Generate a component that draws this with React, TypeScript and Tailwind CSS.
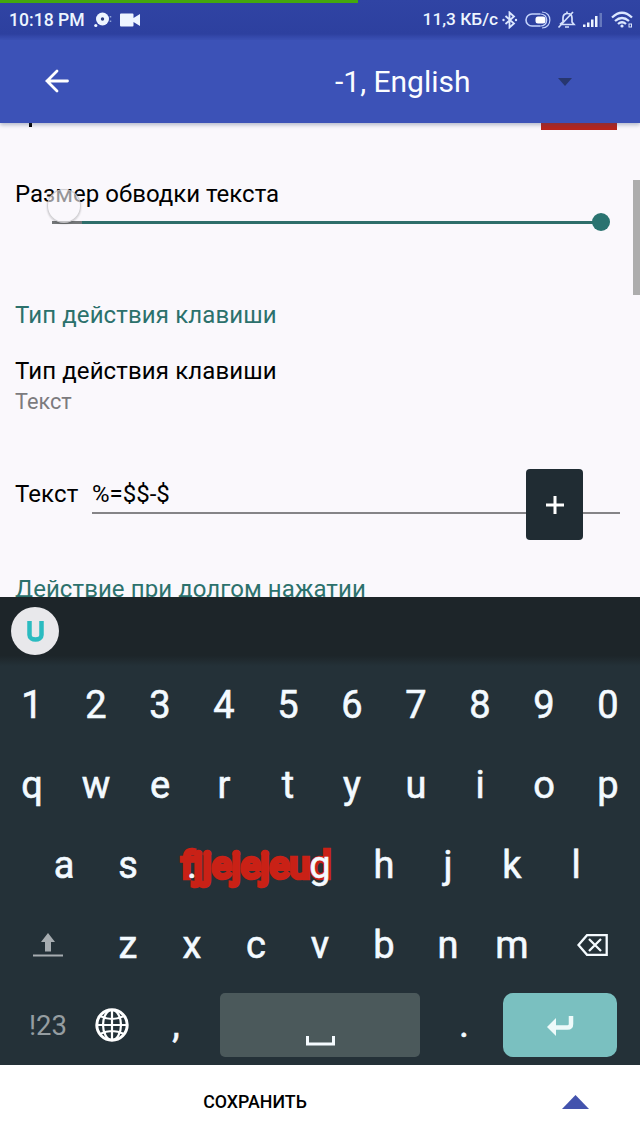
import React from "react";

const digits = ["1", "2", "3", "4", "5", "6", "7", "8", "9", "0"];
const topRow = ["q", "w", "e", "r", "t", "y", "u", "i", "o", "p"];
const bottomLetters = ["z", "x", "c", "v", "b", "n", "m"];

function Key({ children }: { children?: React.ReactNode }) {
  return <div className="flex w-16 shrink-0 items-center justify-center pb-0.5 [-webkit-text-stroke:0.6px_#f0f8ff]">{children}</div>;
}

function StatusBar() {
  return (
    <div className="flex h-10 shrink-0 flex-col bg-[linear-gradient(#3044a4_0,#2d409f_85%,#3c52b7_100%)]">
      <div className="h-[3px] w-[358px] shrink-0 bg-[#43a80d]" />
      <div className="flex h-[34px] items-center pl-[9px] pr-[7px] text-[#edf5ff]">
        <span className="w-[84px] whitespace-nowrap text-[17.6px] font-medium leading-[34px]">10:18 PM</span>
        <svg className="h-[18px] w-[20px]" viewBox="0 0 20 18" fill="none">
          <circle cx="9.5" cy="8" r="6.5" fill="#edf5ff" />
          <circle cx="9.5" cy="8" r="1.7" fill="#2b3c82" />
          <circle cx="2.8" cy="14.5" r="1.6" fill="#edf5ff" />
          <path d="M17.5 5v1.500M17.5 9.500v1.500" stroke="#8fa3d8" strokeWidth="1.500" />
        </svg>
        <svg className="ml-[7px] h-[14px] w-5" viewBox="0 0 20 14" fill="#edf5ff">
          <path d="M1 .5h11.500a1 1 0 0 1 1 1V5L20 1v12l-6.500-4v3.500a1 1 0 0 1-1 1H1a1 1 0 0 1-1-1v-11a1 1 0 0 1 1-1Z" />
        </svg>
        <span className="ml-auto whitespace-nowrap text-[17.300px] font-medium">11,3 КБ/с</span>
        <svg className="ml-1 h-[18px] w-4" viewBox="0 0 16 18" fill="none" stroke="#dbe7ff" strokeWidth="1.800">
          <path d="M3.500 5l8.500 7.500-4.500 4V1.500l4.500 4L3.500 13" />
          <circle cx="1.500" cy="9" r="1.200" fill="#dbe7ff" stroke="none" />
          <circle cx="14" cy="9" r="1.200" fill="#dbe7ff" stroke="none" />
        </svg>
        <svg className="ml-[7px] h-[18px] w-[26px]" viewBox="0 0 26 18" fill="none" stroke="#c3d2fa">
          <path d="M15 3H7a6 6 0 0 0 0 12h8" strokeWidth="1.600" />
          <rect x="10.500" y="5.500" width="10" height="7" rx="2.500" fill="#fff" stroke="none" />
          <path d="M15 3c9-.5 9 12.500 0 12M17 1c10.500 0 10.500 16 0 16" strokeWidth="1.200" />
        </svg>
        <svg className="ml-[6px] h-[18px] w-[19px]" viewBox="0 0 19 18" fill="none" stroke="#d4e0fc" strokeWidth="1.700">
          <path d="M3 13.500h14l-2-2.500V7c0-3-2-4.500-4.500-4.500S6 4 6 7v4l-3 2.500M1.500 16.500L16 1M8 16h4M10 .5v2" />
        </svg>
        <svg className="ml-[6px] h-4 w-[22px]" viewBox="0 0 22 16" fill="#edf5ff">
          <path d="M1 12.500h2.500V15H1zM5 10.500h2.500V15H5zM9 7.500h2.500V15H9zM13 4h2.500v11H13z" />
          <path d="M17.500 1h2.500v14h-2.500z" fill="#6578bd" />
        </svg>
        <svg className="ml-[7px] h-[18px] w-[22px]" viewBox="0 0 22 18" fill="none" stroke="#dbe7ff" strokeWidth="2.300">
          <path d="M1 6.500Q11-3 21 6.500M4 10q7-6 14 0M7 13q4-3.500 8 0" />
          <circle cx="11" cy="15" r="1.600" fill="#dbe7ff" stroke="none" />
          <rect x="18" y="13" width="2.500" height="3" strokeWidth="1" />
        </svg>
      </div>
    </div>
  );
}

export default function App() {
  return (
    <div className="flex h-[1138px] w-[640px] flex-col overflow-hidden bg-white font-['Roboto',sans-serif] text-black">
      <StatusBar />
      <header className="z-10 flex h-[83px] shrink-0 items-center bg-[#3c52b7] pl-[44px] shadow-[0_2px_4px_rgba(50,70,110,0.35)]">
        <svg className="mb-0.5 h-6 w-[26px]" viewBox="0 0 26 24" fill="none" stroke="#fff" strokeWidth="2.800" strokeLinecap="round">
          <path d="M13 2L3 12l10 10M3 12h20.500" />
        </svg>
        <span className="ml-[265px] w-[223px] whitespace-nowrap text-[30px] leading-10 text-[#fbfdff]">-1, English</span>
        <svg className="h-2 w-[14px]" viewBox="0 0 14 8">
          <path d="M0 0h14L7 8z" fill="#27366f" />
        </svg>
      </header>

      <main className="relative flex h-[474px] shrink-0 flex-col overflow-hidden bg-[#faf8fc] text-[24px] leading-8">
        <div className="flex h-[7px] shrink-0 items-start">
          <div className="ml-[29px] h-1 w-[3px] bg-black" />
          <div className="ml-[509px] h-[7px] w-[76px] bg-[#b7251c]" />
        </div>
        <div className="relative mt-[48px] h-[51px] shrink-0 pl-[15px]">
          <div className="whitespace-nowrap">Размер обводки текста</div>
          <div className="mt-[3px] flex h-[18px] items-center pl-[37px]">
            <div className="h-[3px] w-[30px] bg-[#747779]" />
            <div className="h-[3px] w-[511px] bg-[#2e6e6a]" />
            <div className="-ml-px h-[18px] w-[18px] rounded-full bg-[#2a7370]" />
          </div>
          <div className="absolute left-[47px] top-[11px] h-[34px] w-[34px] rounded-full border border-[#bdbdc0]/70 bg-[#faf8fc]/60 shadow-[0_1px_2px_rgba(0,0,0,0.2)]" />
        </div>
        <h2 className="mt-[70px] shrink-0 pl-[15px] tracking-[0.12px] text-[#2c716c]">Тип действия клавиши</h2>
        <div className="mt-[24px] shrink-0 pl-[15px] tracking-[0.12px]">Тип действия клавиши</div>
        <div className="shrink-0 pl-[15px] text-[21.700px] leading-[30px] text-[#7c7b7e]">Текст</div>
        <div className="mt-[52px] flex h-[72px] shrink-0 items-start pl-[15px]">
          <span className="mt-[9px] w-[77px] tracking-[0.100px]">Текст</span>
          <div className="flex h-[45px] w-[528px] items-start border-b-2 border-[#858487]">
            <span className="mt-[9px] leading-8">%=$$-$</span>
            <button className="ml-auto mr-[37px] flex h-[71px] w-[57px] shrink-0 items-center justify-center rounded-[4px] bg-[#202c33]">
              <svg className="h-[18px] w-[18px]" viewBox="0 0 18 18" stroke="#fff" strokeWidth="3">
                <path d="M0 9h18M9 0v18" />
              </svg>
            </button>
          </div>
        </div>
        <h2 className="mt-[32px] shrink-0 pl-[15px] tracking-[0.080px] text-[#2c716c]">Действие при долгом нажатии</h2>
        <div className="absolute right-0 top-[57px] h-[115px] w-[7px] bg-[#adadad]" />
      </main>

      <section className="flex h-[468px] shrink-0 flex-col bg-[#243138] text-[38px] text-[#f5fbff]">
        <div className="flex h-[69px] shrink-0 items-center bg-[linear-gradient(#1d2529_0,#1d2529_85%,#243138_100%)] pb-px pl-[11px]">
          <div className="flex h-12 w-12 items-center justify-center rounded-full bg-[#e8e8eb]">
            <svg className="mt-px h-[21px] w-[17px]" viewBox="0 0 17 21" fill="none" stroke="#2abbc0" strokeWidth="4.500">
              <path d="M2.500 0v14c0 6 12 6 12 0V0" />
            </svg>
          </div>
        </div>
        <div className="flex h-20 shrink-0">{digits.map((key) => <Key key={key}>{key}</Key>)}</div>
        <div className="flex h-20 shrink-0">{topRow.map((key) => <Key key={key}>{key}</Key>)}</div>
        <div className="flex h-20 shrink-0 pl-8">
          <Key>a</Key>
          <Key>s</Key>
          <Key><span className="z-10">.</span></Key>
          <Key>
            <span className="whitespace-nowrap text-[37.500px] text-[#a92a20] [-webkit-text-stroke:4.500px_#c92116]">fjjejejeud</span>
          </Key>
          <Key><span className="z-10">g</span></Key>
          {["h", "j", "k", "l"].map((key) => <Key key={key}>{key}</Key>)}
        </div>
        <div className="flex h-20 shrink-0">
          <div className="flex w-24 items-center justify-center pb-0.5">
            <svg className="h-6 w-[30px]" viewBox="0 0 30 24" fill="#a6acb0">
              <path d="M15 0L22 9H18v9.500h-6V9h-4zM0 21.500h30v2H0z" />
            </svg>
          </div>
          {bottomLetters.map((key) => <Key key={key}>{key}</Key>)}
          <div className="flex w-24 items-center justify-center pb-[3px]">
            <svg className="h-[22px] w-[31px]" viewBox="0 0 31 22" fill="none" stroke="#f5fbff" strokeWidth="2.300">
              <path d="M10 1.200h19.700v19.600H10L1.500 11zM12 5l12 12M24 5L12 17" />
            </svg>
          </div>
        </div>
        <div className="flex h-[79px] shrink-0">
          <div className="flex w-20 items-center pl-[29px] text-[27.500px] text-[#959da1]">!23</div>
          <Key>
            <svg className="h-[34px] w-[34px]" viewBox="0 0 34 34" fill="none" stroke="#fff" strokeWidth="2.200">
              <circle cx="17" cy="17" r="15.200" strokeWidth="3" />
              <ellipse cx="17" cy="17" rx="9" ry="15" />
              <path d="M17 1v32M1 17h32M5 8q12 6 24 0M5 26q12-6 24 0" />
            </svg>
          </Key>
          <Key>,</Key>
          <div className="mx-3 mt-[7px] flex h-16 w-[200px] items-end justify-center rounded-[5px] bg-[#4b595b] pb-[11px]">
            <svg className="h-[10px] w-[29px]" viewBox="0 0 29 10" fill="none" stroke="#f5fbff" strokeWidth="3">
              <path d="M1.500 0v8h26V0" />
            </svg>
          </div>
          <Key>.</Key>
          <div className="ml-[7px] mt-[7px] flex h-16 w-[114px] items-center justify-center rounded-[10px] bg-[#7ac0c0]">
            <svg className="mt-0.5 h-[22px] w-[27px]" viewBox="0 0 27 22" fill="none">
              <path d="M24 1v8q0 3.500-3.500 3.500H8" stroke="#eefafa" strokeWidth="4.500" />
              <path d="M0 12L9 3v18z" fill="#eefafa" />
            </svg>
          </div>
        </div>
      </section>

      <footer className="flex flex-1 items-center bg-white">
        <button className="w-[510px] pt-0.5 text-center text-[17.800px] font-medium">СОХРАНИТЬ</button>
        <svg className="ml-[52px] h-[14px] w-[27px]" viewBox="0 0 27 14">
          <path d="M13.500 0L27 14H0z" fill="#4353ad" />
        </svg>
      </footer>
    </div>
  );
}
